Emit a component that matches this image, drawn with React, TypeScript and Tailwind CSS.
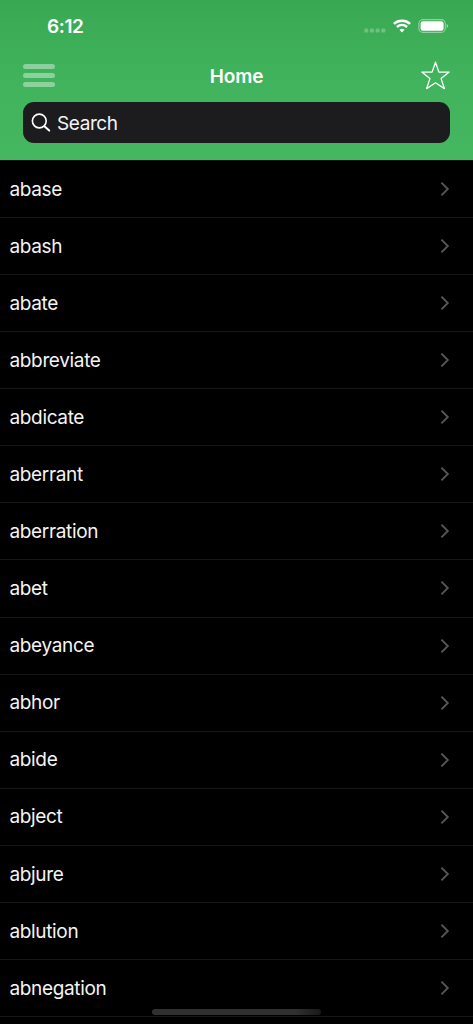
const words = [
  'abase',
  'abash',
  'abate',
  'abbreviate',
  'abdicate',
  'aberrant',
  'aberration',
  'abet',
  'abeyance',
  'abhor',
  'abide',
  'abject',
  'abjure',
  'ablution',
  'abnegation',
];

function StatusBar() {
  return (
    <div className="flex h-[52px] items-center justify-between pr-[24px] pl-[47px]">
      <time className="pt-[2px] text-[19px] leading-6 font-semibold tracking-[-0.4px]">6:12</time>
      <div className="flex items-center">
        <svg width="22" height="16" viewBox="0 0 22 16" fill="white" fillOpacity="0.25" aria-hidden="true">
          <rect x="0.3" y="10.6" width="4" height="4" rx="1.2" />
          <rect x="5.9" y="10.6" width="4" height="4" rx="1.2" />
          <rect x="11.6" y="10.6" width="4" height="4" rx="1.2" />
          <rect x="17.3" y="10.6" width="4" height="4" rx="1.2" />
        </svg>
        <svg className="ml-[7px]" width="18" height="14" viewBox="0 0 18 14" fill="none" stroke="white" aria-hidden="true">
          <path d="M0.9 4.8C5.4 0.6 12.6 0.6 17.1 4.8" strokeWidth="2.5" />
          <path d="M3.9 8C6.9 5.3 11.1 5.3 14.1 8" strokeWidth="2.4" />
          <path d="M9 13.4L6.5 10.7C7.9 9.4 10.1 9.4 11.5 10.7Z" fill="white" stroke="none" />
        </svg>
        <svg className="ml-[7px]" width="31" height="14" viewBox="0 0 31 14" aria-hidden="true">
          <rect x="0.9" y="0.6" width="26.4" height="12.8" rx="4" fill="none" stroke="white" strokeOpacity="0.45" strokeWidth="1.1" />
          <rect x="2.6" y="2.2" width="23" height="9.6" rx="2.2" fill="white" />
          <path d="M28.7 4.9C30.6 5.6 30.6 8.4 28.7 9.1Z" fill="white" fillOpacity="0.5" />
        </svg>
      </div>
    </div>
  );
}

function NavBar() {
  return (
    <nav className="grid h-[50px] grid-cols-[1fr_auto_1fr] items-center px-[23px]">
      <button aria-label="Menu" className="flex w-8 flex-col gap-[4.3px] pb-[3px]">
        <span className="h-[4.8px] rounded-full bg-white/40" />
        <span className="h-[4.8px] rounded-full bg-white/40" />
        <span className="h-[4.8px] rounded-full bg-white/40" />
      </button>
      <h1 className="text-[19px] leading-6 font-semibold tracking-[-0.1px]">Home</h1>
      <button aria-label="Favorites" className="justify-self-end pb-[3px]">
        <svg className="block" width="29" height="29" viewBox="0 0 29 29" fill="none" stroke="white" strokeWidth="1.3" strokeLinejoin="round">
          <path d="M14.5 1.2L17.9 11.1H28.2L20.1 17.6L23.4 27.6L14.5 21.7L5.6 27.6L8.9 17.6L0.8 11.1H11.1Z" />
        </svg>
      </button>
    </nav>
  );
}

export default function App() {
  return (
    <div className="relative flex h-[1024px] w-[473px] flex-col overflow-hidden bg-black font-['Inter','Liberation_Sans',sans-serif] text-white">
      <header className="h-40 shrink-0 bg-linear-to-b from-[#39a853] from-0% via-[#41b35d] via-50% to-[#46b761] to-100%">
        <StatusBar />
        <NavBar />
        <div className="mx-[23px] flex h-[41px] items-center rounded-[11px] bg-[#1c1c1e] pl-[8px]">
          <svg width="20" height="20" viewBox="0 0 20 20" fill="none" stroke="white" strokeLinecap="round" aria-hidden="true">
            <circle cx="8.3" cy="8" r="6.9" strokeWidth="1.6" />
            <path d="M13.4 13.2L18.2 17.6" strokeWidth="2" />
          </svg>
          <span className="ml-[6px] pt-[2px] text-[19px] leading-6 tracking-[-0.4px] text-[#f4f4f5]">Search</span>
        </div>
      </header>
      <ul className="shrink-0 border-t border-[#161617]">
        {words.map((word) => (
          <li key={word} className="flex h-[57.07px] items-center justify-between border-b border-[#161617] pr-[23.5px] pl-[9.5px]">
            <span className="pt-[1.5px] text-[19px] leading-6 tracking-[-0.35px] text-[#f4f4f4]">{word}</span>
            <svg width="10" height="16" viewBox="0 0 10 16" fill="none" stroke="#56565a" strokeWidth="1.9" aria-hidden="true">
              <path d="M1.4 1.6L7.8 8L1.4 14.4" />
            </svg>
          </li>
        ))}
      </ul>
      <div className="absolute top-[1009px] left-[152px] h-[5.5px] w-[169px] rounded-full bg-linear-to-r from-[#303030] from-85% to-[#191919]" />
    </div>
  );
}
